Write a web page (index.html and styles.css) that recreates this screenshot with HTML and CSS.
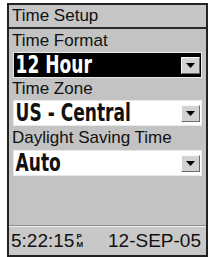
FILE: index.html
```html
<!DOCTYPE html>
<html>
<head>
    <title>Time Setup</title>
    <link rel="stylesheet" href="styles.css">
</head>
<body>
    <div class="screen">
        <div class="title">Time Setup</div>
        <div class="label">Time Format</div>
        <div class="field selected">
            <span class="value">12 Hour</span>
            <span class="arrow"><svg width="9" height="5" viewBox="0 0 9 5"><polygon points="0,0 9,0 4.5,5" fill="#000"/></svg></span>
        </div>
        <div class="label short">Time Zone</div>
        <div class="field">
            <span class="value">US - Central</span>
            <span class="arrow"><svg width="9" height="5" viewBox="0 0 9 5"><polygon points="0,0 9,0 4.5,5" fill="#000"/></svg></span>
        </div>
        <div class="label tall">Daylight Saving Time</div>
        <div class="field">
            <span class="value">Auto</span>
            <span class="arrow"><svg width="9" height="5" viewBox="0 0 9 5"><polygon points="0,0 9,0 4.5,5" fill="#000"/></svg></span>
        </div>
        <div class="spacer"></div>
        <div class="status">
            <span class="clock">5:22:15<span class="ampm"><span>P</span><span>M</span></span></span>
            <span class="date">12-SEP-05</span>
        </div>
    </div>
</body>
</html>
```

FILE: styles.css
```css
body {
    margin: 0;
    background: #fff;
    font-family: "Liberation Sans", Arial, sans-serif;
    color: #111;
}
.screen {
    box-sizing: border-box;
    width: 201px;
    height: 254px;
    margin: 3px 0 0 7px;
    border: 2px solid #222;
    background: #c3c3c3;
    display: flex;
    flex-direction: column;
}
.title {
    height: 22px;
    line-height: 22px;
    border-bottom: 2px solid #2a2a2a;
    padding-left: 3px;
    font-size: 17px;
    background: #c6c6c6;
}
.label {
    height: 23px;
    line-height: 24px;
    padding-left: 3px;
    font-size: 17px;
}
.label.short {
    height: 22px;
    line-height: 22px;
}
.label.tall {
    height: 24px;
    line-height: 23px;
}
.field {
    box-sizing: border-box;
    height: 26px;
    margin: 0 4px;
    border: 1px solid #e8e8e8;
    background: #fff;
    display: flex;
    align-items: center;
    justify-content: space-between;
}
.field.selected {
    background: #000;
    color: #fff;
}
.value {
    padding-left: 2px;
    font-family: "DejaVu Sans Condensed", "DejaVu Sans", sans-serif;
    font-weight: bold;
    font-size: 24px;
    line-height: 24px;
    transform: scaleX(0.79);
    transform-origin: left center;
    white-space: nowrap;
}
.arrow {
    box-sizing: border-box;
    width: 19px;
    height: 17px;
    margin-right: 1px;
    background: #d2d2d2;
    border: 1px solid;
    border-color: #fafafa #6a6a6a #6a6a6a #fafafa;
    display: flex;
    align-items: center;
    justify-content: center;
}
.arrow svg {
    display: block;
}
.spacer {
    flex: 1;
}
.status {
    box-sizing: border-box;
    height: 30px;
    border-top: 1px solid #8c8c8c;
    box-shadow: inset 0 1px 0 #f2f2f2;
    display: flex;
    align-items: center;
    justify-content: space-between;
    padding: 0 5px 0 2px;
    font-size: 19px;
    background: #c8c8c8;
}
.clock {
    display: flex;
    align-items: center;
}
.ampm {
    display: flex;
    flex-direction: column;
    font-size: 8px;
    line-height: 8px;
    margin-left: 2px;
    font-weight: bold;
}
```
